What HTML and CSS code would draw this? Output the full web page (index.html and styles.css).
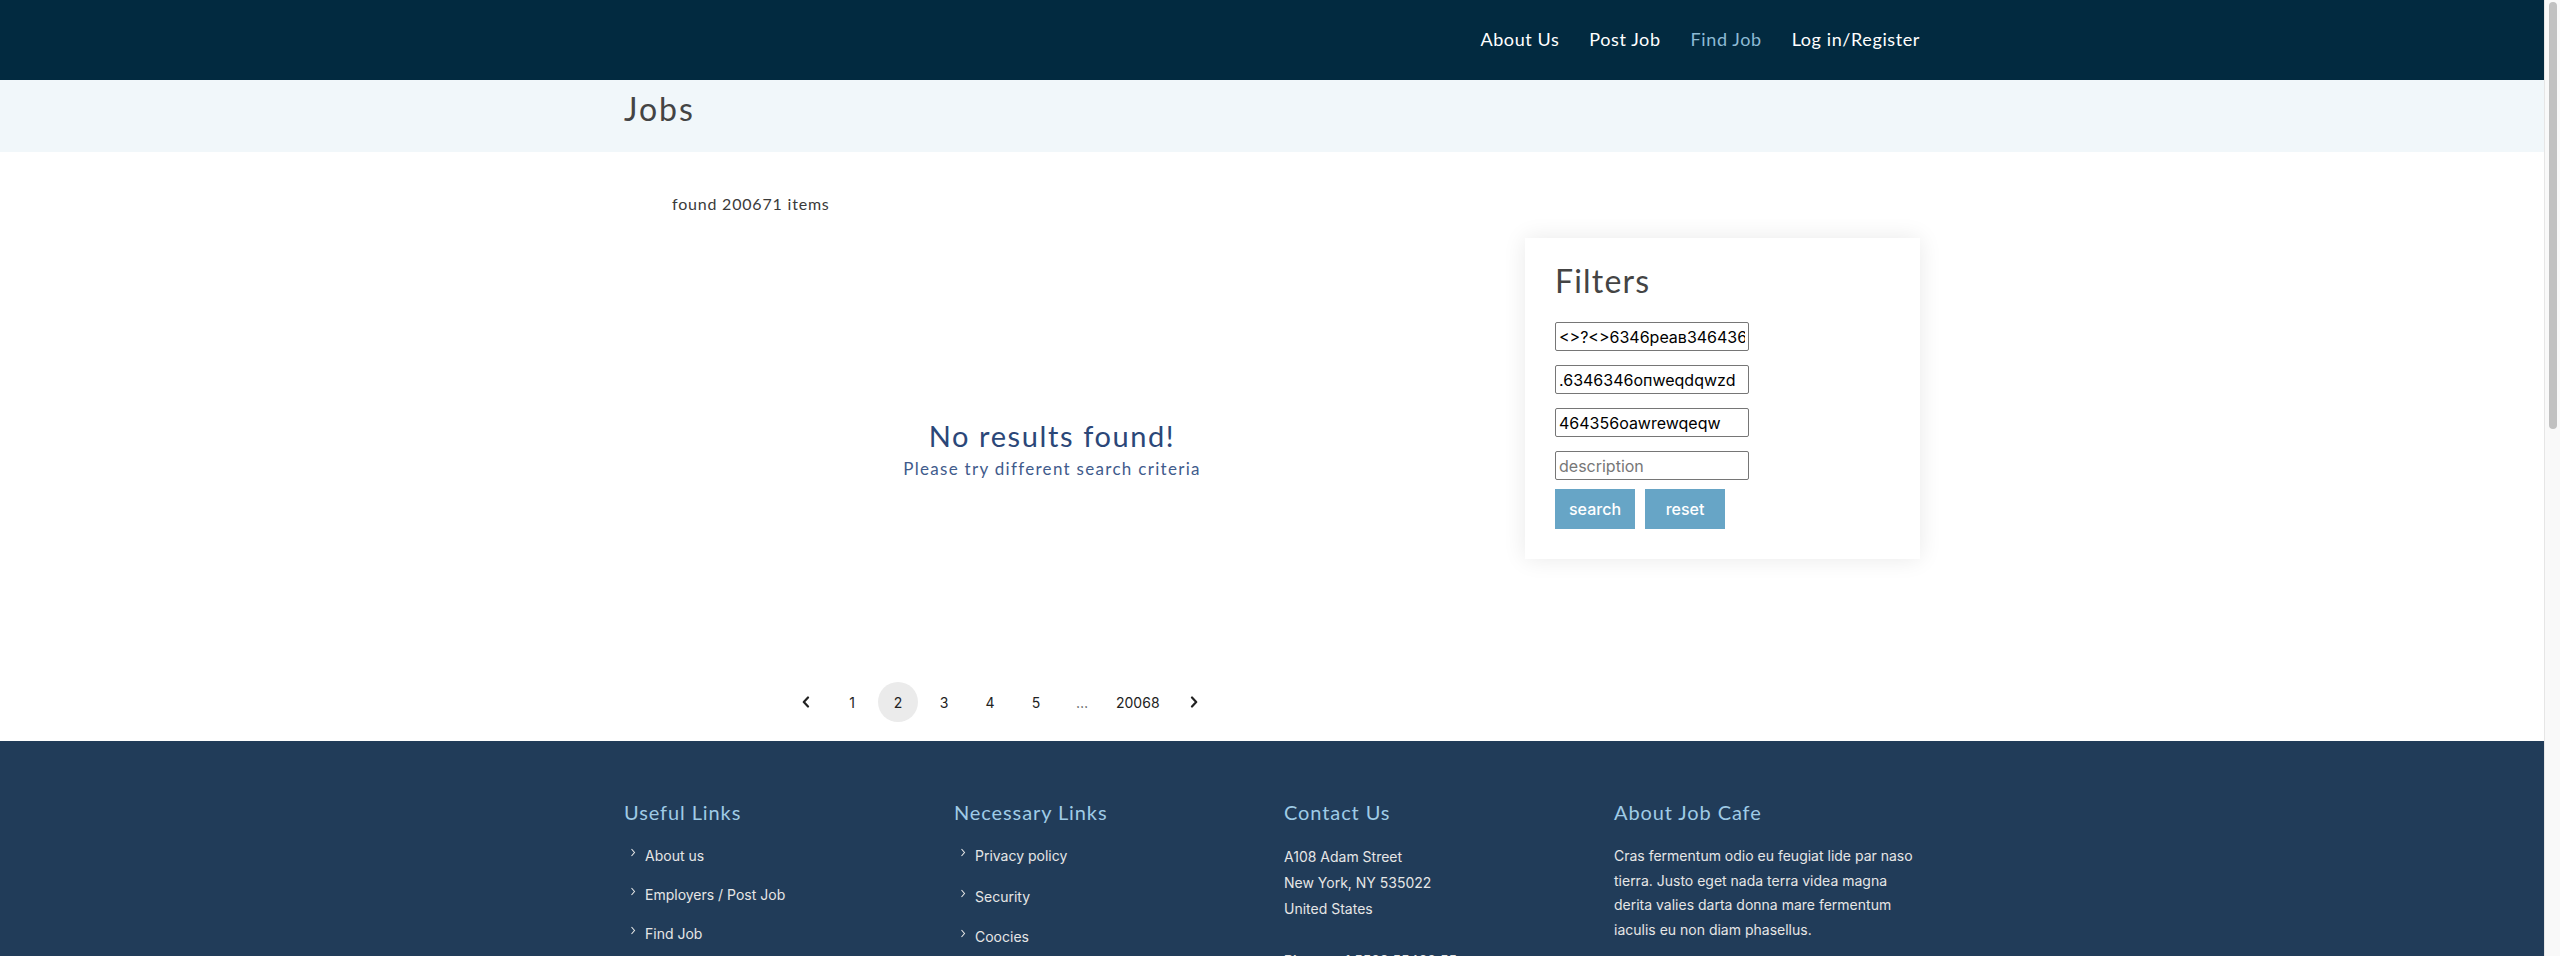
FILE: index.html
```html
<!DOCTYPE html>
<html lang="en">
<head>
<meta charset="utf-8">
<title>Jobs</title>
<link rel="stylesheet" href="styles.css">
</head>
<body>
<div class="scroll-thumb"></div>
<header class="topnav">
  <div class="container nav-inner">
    <nav class="nav-links">
      <a href="#">About Us</a>
      <a href="#">Post Job</a>
      <a href="#" class="active">Find Job</a>
      <a href="#">Log in/Register</a>
    </nav>
  </div>
</header>

<section class="page-title">
  <div class="container">
    <h1>Jobs</h1>
  </div>
</section>

<main class="container main-row">
  <div class="col-main">
    <p class="found">found 200671 items</p>
    <div class="empty">
      <h2>No results found!</h2>
      <p>Please try different search criteria</p>
    </div>
    <ul class="pagination">
      <li class="pg-arrow"><svg width="8" height="12" viewBox="0 0 8 12"><path d="M6 1.5 L1.8 6 L6 10.5" fill="none" stroke="#222" stroke-width="2.2" stroke-linecap="round" stroke-linejoin="round"/></svg></li>
      <li>1</li>
      <li class="current">2</li>
      <li>3</li>
      <li>4</li>
      <li>5</li>
      <li class="dots">…</li>
      <li class="wide">20068</li>
      <li class="pg-arrow"><svg width="8" height="12" viewBox="0 0 8 12"><path d="M2 1.5 L6.2 6 L2 10.5" fill="none" stroke="#222" stroke-width="2.2" stroke-linecap="round" stroke-linejoin="round"/></svg></li>
    </ul>
  </div>
  <aside class="col-side">
    <div class="filter-card">
      <h3>Filters</h3>
      <form class="filter-form">
        <input type="text" value="<>?<>6346peaв346436">
        <input type="text" value=".6346346oпweqdqwzd">
        <input type="text" value="464356oawrewqeqw">
        <input type="text" placeholder="description">
        <div class="btns">
          <button type="button">search</button>
          <button type="button">reset</button>
        </div>
      </form>
    </div>
  </aside>
</main>

<footer class="footer">
  <div class="container footer-row">
    <div class="fcol">
      <h4>Useful Links</h4>
      <ul class="flinks">
        <li><svg class="chev" width="6" height="9" viewBox="0 0 6 9"><path d="M1.5 1 L4.5 4.5 L1.5 8" fill="none" stroke="#e6e6e6" stroke-width="1.1"/></svg>About us</li>
        <li><svg class="chev" width="6" height="9" viewBox="0 0 6 9"><path d="M1.5 1 L4.5 4.5 L1.5 8" fill="none" stroke="#e6e6e6" stroke-width="1.1"/></svg>Employers / Post Job</li>
        <li><svg class="chev" width="6" height="9" viewBox="0 0 6 9"><path d="M1.5 1 L4.5 4.5 L1.5 8" fill="none" stroke="#e6e6e6" stroke-width="1.1"/></svg>Find Job</li>
      </ul>
    </div>
    <div class="fcol">
      <h4>Necessary Links</h4>
      <ul class="flinks nec">
        <li><svg class="chev" width="6" height="9" viewBox="0 0 6 9"><path d="M1.5 1 L4.5 4.5 L1.5 8" fill="none" stroke="#e6e6e6" stroke-width="1.1"/></svg>Privacy policy</li>
        <li><svg class="chev" width="6" height="9" viewBox="0 0 6 9"><path d="M1.5 1 L4.5 4.5 L1.5 8" fill="none" stroke="#e6e6e6" stroke-width="1.1"/></svg>Security</li>
        <li><svg class="chev" width="6" height="9" viewBox="0 0 6 9"><path d="M1.5 1 L4.5 4.5 L1.5 8" fill="none" stroke="#e6e6e6" stroke-width="1.1"/></svg>Coocies</li>
      </ul>
    </div>
    <div class="fcol">
      <h4>Contact Us</h4>
      <p class="contact">A108 Adam Street<br>New York, NY 535022<br>United States</p>
      <p class="contact"><strong>Phone:</strong> +1 5589 55488 55<br><strong>Email:</strong> info@example.com</p>
    </div>
    <div class="fcol">
      <h4>About Job Cafe</h4>
      <p class="about">Cras fermentum odio eu feugiat lide par naso tierra. Justo eget nada terra videa magna derita valies darta donna mare fermentum iaculis eu non diam phasellus.</p>
    </div>
  </div>
  <div class="container copyright">© Copyright Job Cafe. All Rights Reserved</div>
</footer>
</body>
</html>
```

FILE: styles.css
```css
html, body {
  margin: 0;
  padding: 0;
}

/* the reference shows a classic 15px scrollbar track on the right */
html {
  background: #f9f9f9;
}

body {
  margin-right: 15px;
  border-right: 1px solid #e6e6e6;
  box-sizing: border-box;
  font-family: "Lato", "Noto Sans", sans-serif;
  color: #333;
  background: #fff;
}

.scroll-thumb {
  position: fixed;
  top: 2px;
  right: 3px;
  width: 8px;
  height: 427px;
  border-radius: 4px;
  background: #c1c1c1;
  z-index: 10;
}

.container {
  width: 1296px;
  margin: 0 auto;
}

/* ---------- top nav ---------- */
.topnav {
  background: #022a40;
  height: 80px;
}

.nav-inner {
  height: 80px;
  display: flex;
  justify-content: flex-end;
  align-items: center;
}

.nav-links {
  display: flex;
  gap: 30px;
  padding-bottom: 2px;
}

.nav-links a {
  color: #fff;
  text-decoration: none;
  font-size: 18px;
  letter-spacing: 0.6px;
}

.nav-links a.active {
  color: #8dbad5;
}

/* ---------- page title band ---------- */
.page-title {
  background: #f1f7fa;
  height: 72px;
}

.page-title .container {
  height: 72px;
  display: flex;
  align-items: center;
}

.page-title h1 {
  margin: 0 0 14px;
  font-weight: 400;
  font-size: 32px;
  letter-spacing: 2px;
  color: #444;
  line-height: 1;
}

/* ---------- main ---------- */
.main-row {
  display: flex;
  justify-content: space-between;
  min-height: 589px;
}

.col-main {
  width: 856px;
  padding-top: 40px;
}

.found {
  margin: 0 0 0 48px;
  font-size: 16px;
  line-height: 24px;
  letter-spacing: 0.8px;
  color: #3a3a3a;
}

.empty {
  text-align: center;
  margin-top: 202px;
}

.empty h2 {
  margin: 0 0 4px;
  font-weight: 400;
  font-size: 29px;
  line-height: 35px;
  letter-spacing: 1.6px;
  color: #2b4778;
}

.empty p {
  margin: 0;
  font-size: 17px;
  line-height: 24px;
  letter-spacing: 1.3px;
  color: #3f5b8c;
}

.pagination {
  list-style: none;
  margin: 201px 0 0 162px;
  padding: 0;
  display: flex;
  gap: 6px;
  font-family: "Inter", "Liberation Sans", sans-serif;
  font-size: 14px;
  color: #222;
}

.pagination li {
  min-width: 40px;
  height: 40px;
  border-radius: 20px;
  display: flex;
  align-items: center;
  justify-content: center;
  box-sizing: border-box;
}

.pagination li.wide {
  padding: 0 8px;
}

.pagination li.current {
  background: #ebebeb;
}

.pagination li.dots {
  color: #555;
}

.col-side {
  width: 395px;
}

.filter-card {
  margin-top: 86px;
  background: #fff;
  box-shadow: 0 0 22px rgba(0, 0, 0, 0.09);
  padding: 23px 30px 30px 30px;
}

.filter-card h3 {
  margin: 0 0 21px;
  font-weight: 400;
  font-size: 32px;
  line-height: 40px;
  letter-spacing: 1.2px;
  color: #444;
}

.filter-form {
  display: flex;
  flex-direction: column;
  align-items: flex-start;
  gap: 14px;
}

.filter-form input {
  width: 194px;
  height: 29px;
  box-sizing: border-box;
  border: 1px solid #767676;
  border-radius: 2px;
  padding: 1px 3px;
  font-family: "Inter", "Liberation Sans", sans-serif;
  font-size: 16px;
  color: #000;
  background: #fff;
  outline: none;
}

.filter-form input::placeholder {
  color: #777;
}

.btns {
  display: flex;
  gap: 10px;
  margin-top: -5px;
}

.btns button {
  width: 80px;
  height: 40px;
  border: none;
  border-radius: 0;
  background: #67a5c6;
  color: #fff;
  font-family: "Inter", "Liberation Sans", sans-serif;
  font-size: 16px;
  font-weight: 500;
  padding: 0;
}

/* ---------- footer ---------- */
.footer {
  background: #213c59;
  min-height: 1399px;
  padding-top: 59px;
  box-sizing: border-box;
}

.footer-row {
  display: grid;
  grid-template-columns: repeat(4, 1fr);
  column-gap: 24px;
}

.fcol h4 {
  margin: 0 0 20px;
  font-weight: 400;
  font-size: 20px;
  line-height: 24px;
  letter-spacing: 0.9px;
  color: #9fcbe6;
}

.flinks {
  list-style: none;
  margin: 0;
  padding: 0 0 0 6px;
  font-family: "Inter", "Liberation Sans", sans-serif;
  font-size: 14px;
  color: #e6e6e6;
}

.flinks li {
  line-height: 24px;
  margin-bottom: 15px;
  display: flex;
  align-items: flex-start;
  gap: 9px;
}

.flinks.nec li {
  margin-bottom: 16.5px;
}

.chev {
  margin-top: 4px;
}

.contact {
  margin: 0 0 26px;
  font-family: "Inter", "Liberation Sans", sans-serif;
  font-size: 14px;
  line-height: 26px;
  color: #e6e6e6;
}

.contact strong {
  font-weight: 600;
}

.about {
  margin: 0;
  width: 300px;
  font-family: "Inter", "Liberation Sans", sans-serif;
  font-size: 14px;
  line-height: 24.5px;
  color: #e6e6e6;
}

.copyright {
  margin-top: 60px;
  padding-top: 30px;
  border-top: 1px solid #2f4d6c;
  font-family: "Inter", "Liberation Sans", sans-serif;
  font-size: 14px;
  color: #cfd8e0;
  text-align: center;
}
```
